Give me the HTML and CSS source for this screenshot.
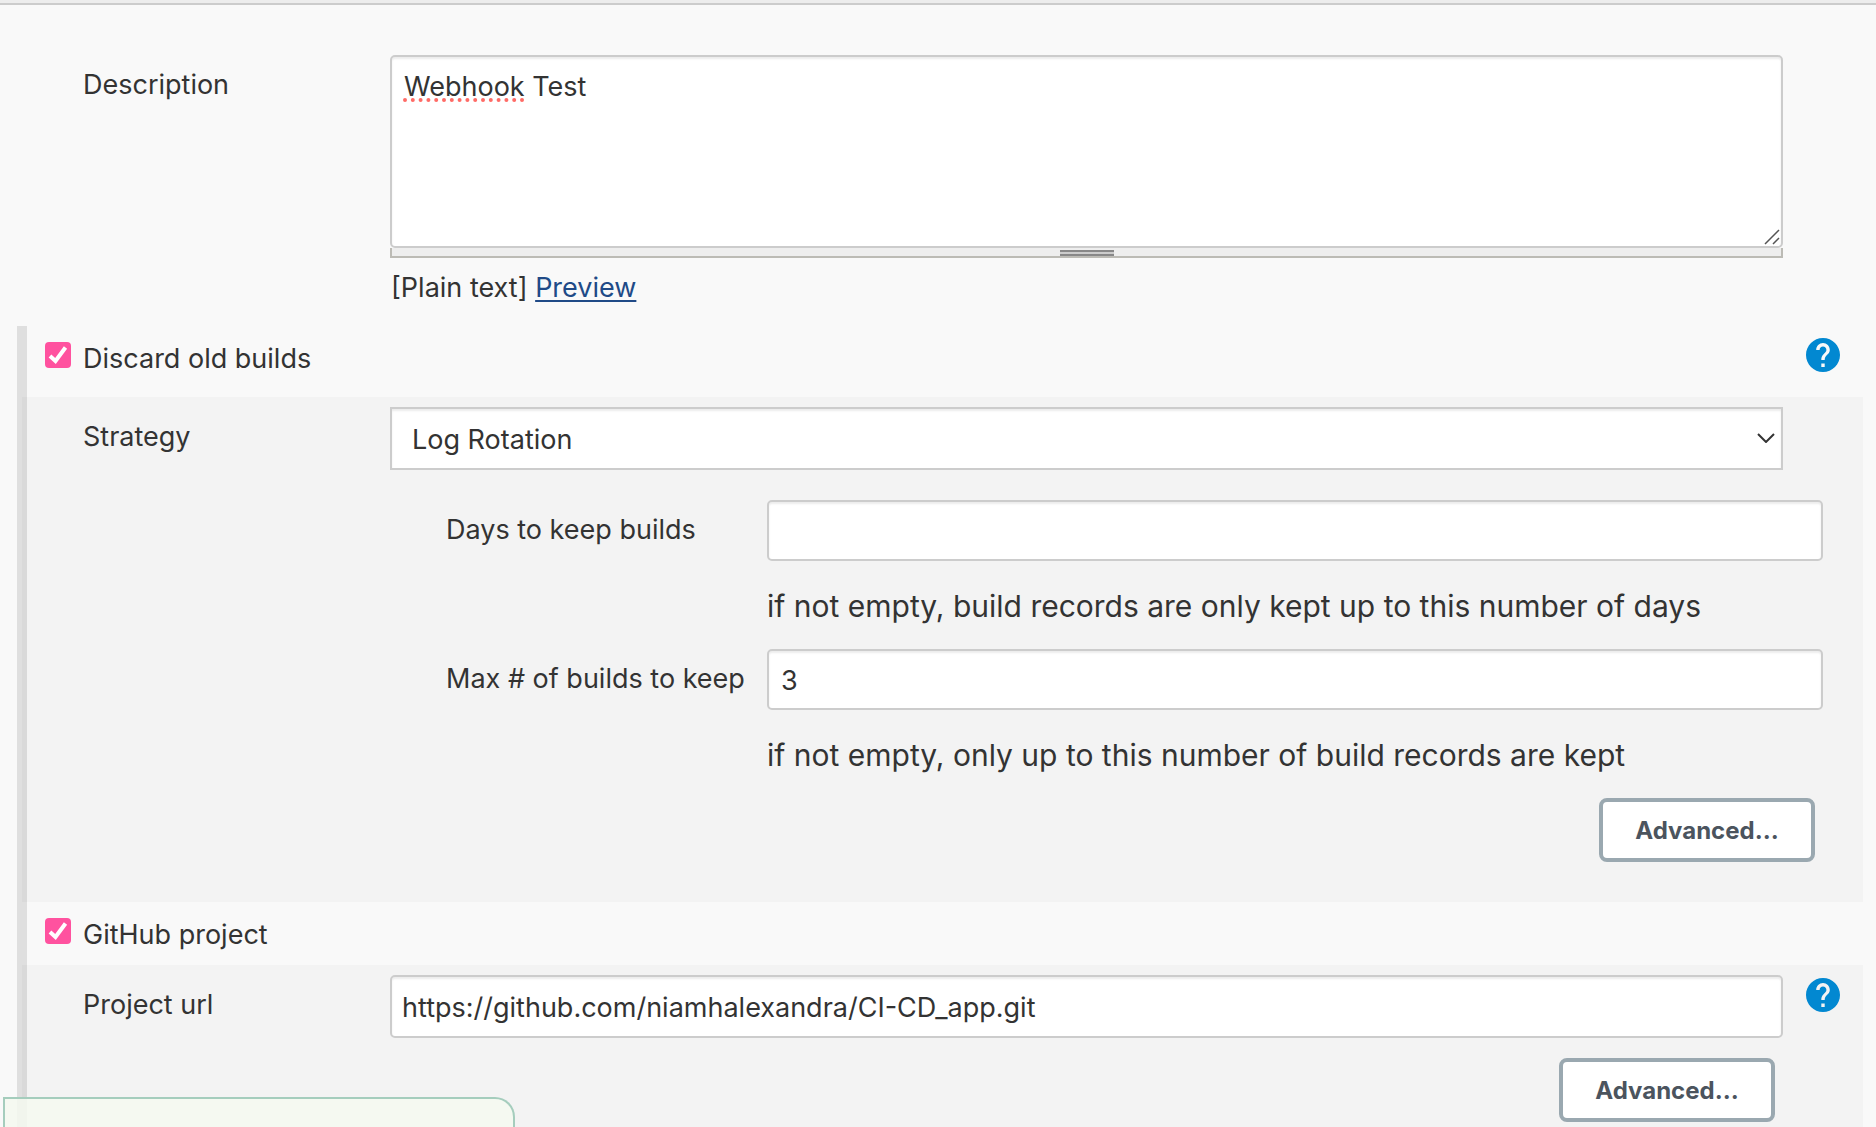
FILE: index.html
```html
<!DOCTYPE html>
<html lang="en">
<head>
<meta charset="utf-8">
<meta name="viewport" content="width=device-width, initial-scale=1">
<title>Job configuration</title>
<link rel="stylesheet" href="styles.css">
</head>
<body>
<div class="topbar"></div>
<form class="config">
  <section class="row row-description">
    <label class="label" for="description">Description</label>
    <div class="field">
      <div class="textarea-wrap">
        <textarea class="control textarea" id="description" spellcheck="false">Webhook Test</textarea>
        <svg class="misspelling" viewBox="0 0 124 4" aria-hidden="true"><path d="M2 2h121"/></svg>
        <svg class="resizer" viewBox="0 0 16 16" aria-hidden="true"><path d="M1 15 15 1M9 15l6-6"/></svg>
      </div>
      <div class="handle"><span class="grip"></span></div>
      <p class="markup">[Plain text] <a href="#preview">Preview</a></p>
    </div>
  </section>

  <div class="options">
    <div class="option option-discard">
      <span class="check">
        <input type="checkbox" class="checkbox" id="discard" checked>
        <svg class="tick" viewBox="0 0 26 26" aria-hidden="true"><path d="M5 14l5.500 5L20.500 5.500"/></svg>
      </span>
      <label class="option-label" for="discard">Discard old builds</label>
      <button type="button" class="help" aria-label="Help for discard old builds">
        <svg viewBox="2 2 20 20" aria-hidden="true"><path d="M12 2C6.480 2 2 6.480 2 12s4.480 10 10 10 10-4.480 10-10S17.520 2 12 2zm1 17h-2v-2h2v2zm2.070-7.750l-.9.920C13.450 12.900 13 13.500 13 15h-2v-.5c0-1.100.45-2.100 1.170-2.830l1.240-1.260c.37-.36.590-.86.590-1.410 0-1.100-.9-2-2-2s-2 .9-2 2H8c0-2.210 1.790-4 4-4s4 1.790 4 4c0 .88-.36 1.680-.93 2.250z"/></svg>
      </button>
    </div>
    <div class="panel panel-discard">
      <div class="row">
        <label class="label" for="strategy">Strategy</label>
        <div class="select-wrap">
          <select class="control select" id="strategy"><option>Log Rotation</option></select>
          <svg class="chevron" viewBox="0 0 18 10" aria-hidden="true"><path d="M1 1l8 8 8-8"/></svg>
        </div>
      </div>
      <div class="nested">
        <label class="label" for="days">Days to keep builds</label>
        <div class="field">
          <input type="text" class="control input" id="days">
          <p class="hint">if not empty, build records are only kept up to this number of days</p>
        </div>
        <label class="label" for="max">Max # of builds to keep</label>
        <div class="field">
          <input type="text" class="control input" id="max" value="3">
          <p class="hint">if not empty, only up to this number of build records are kept</p>
        </div>
      </div>
      <div class="actions actions-nested"><button type="button" class="button">Advanced...</button></div>
    </div>

    <div class="option option-github">
      <span class="check">
        <input type="checkbox" class="checkbox" id="github" checked>
        <svg class="tick" viewBox="0 0 26 26" aria-hidden="true"><path d="M5 14l5.500 5L20.500 5.500"/></svg>
      </span>
      <label class="option-label" for="github">GitHub project</label>
    </div>
    <div class="panel panel-github">
      <div class="row">
        <label class="label" for="url">Project url</label>
        <input type="text" class="control input input-url" id="url" value="https://github.com/niamhalexandra/CI-CD_app.git">
        <button type="button" class="help" aria-label="Help for project url">
          <svg viewBox="2 2 20 20" aria-hidden="true"><path d="M12 2C6.480 2 2 6.480 2 12s4.480 10 10 10 10-4.480 10-10S17.520 2 12 2zm1 17h-2v-2h2v2zm2.070-7.750l-.9.920C13.450 12.900 13 13.500 13 15h-2v-.5c0-1.100.45-2.100 1.170-2.830l1.240-1.260c.37-.36.590-.86.590-1.410 0-1.100-.9-2-2-2s-2 .9-2 2H8c0-2.210 1.790-4 4-4s4 1.790 4 4c0 .88-.36 1.680-.93 2.250z"/></svg>
        </button>
      </div>
      <div class="actions"><button type="button" class="button">Advanced...</button></div>
    </div>
  </div>
</form>
<div class="notice"></div>
</body>
</html>
```

FILE: styles.css
```css
* {
  box-sizing: border-box;
}

body {
  margin: 0;
  min-height: 100vh;
  display: flex;
  flex-direction: column;
  background: #f9f9f9;
  color: #333;
  font: 27px/36px Inter, "Liberation Sans", sans-serif;
}

p {
  margin: 0;
}

.topbar {
  height: 5px;
  background: #ededed;
  border-bottom: 2px solid #ccc;
}

.config {
  flex: 1;
  display: flex;
  flex-direction: column;
  padding: 50px 13px 0 17px;
}

.row {
  display: grid;
  grid-template-columns: 307px 1fr 80px;
  padding-left: 66px;
}

.label {
  padding-top: 12px;
}

.row-description {
  padding-bottom: 20px;
}

.control {
  display: block;
  width: 100%;
  margin: 0;
  border: 2px solid #ccc;
  border-radius: 5px;
  background: #fff;
  box-shadow: inset 0 2px 2px rgba(0, 0, 0, 0.08);
  color: inherit;
  font: inherit;
  outline: 0;
}

.textarea-wrap,
.select-wrap {
  position: relative;
}

.textarea {
  height: 193px;
  padding: 12px;
  resize: none;
}

.misspelling {
  position: absolute;
  top: 43px;
  left: 13px;
  width: 124px;
  height: 4px;
  fill: none;
  stroke: #ff6b66;
  stroke-width: 4;
  stroke-linecap: round;
  stroke-dasharray: 0 7.8;
}

.resizer {
  position: absolute;
  right: 3px;
  bottom: 3px;
  width: 16px;
  height: 16px;
  fill: none;
  stroke: #555;
  stroke-width: 1.5;
}

.handle {
  display: flex;
  justify-content: center;
  height: 10px;
  padding-top: 2px;
  border: 2px solid #bcbbb5;
  border-top: 0;
  background: #eee;
}

.grip {
  width: 54px;
  height: 6px;
  border: solid #888;
  border-width: 2px 0;
  background: #ccc;
}

.markup {
  padding: 12px 0 0 1px;
}

a {
  color: #204a87;
  text-decoration-thickness: 2px;
  text-underline-offset: 3px;
}

.options {
  flex: 1;
  display: flex;
  flex-direction: column;
  border-left: 10px solid #dfdfdf;
}

.option {
  display: flex;
  align-items: flex-start;
  padding: 12px 23px 0 18px;
}

.option-discard {
  height: 71px;
}

.option-github {
  height: 63px;
}

.check {
  display: grid;
  margin: 4px 12px 0 0;
}

.checkbox,
.tick {
  grid-area: 1 / 1;
  width: 26px;
  height: 26px;
  margin: 0;
}

.checkbox {
  appearance: none;
  border-radius: 4px;
  background: #ff529f;
}

.tick {
  fill: none;
  stroke: #fff;
  stroke-width: 4;
  pointer-events: none;
}

.option-label {
  flex: 1;
  padding-top: 3px;
}

.help {
  justify-self: center;
  width: 34px;
  height: 34px;
  margin: 0;
  padding: 0;
  border: 0;
  background: none;
}

.row .help {
  margin-top: 3px;
}

.help svg {
  display: block;
  width: 34px;
  height: 34px;
  fill: #0288d1;
}

.panel {
  margin-left: -5px;
  padding-top: 10px;
  border-left: 5px solid #d9d9d9;
  background: #f3f3f3;
}

.panel .row {
  padding-left: 56px;
}

.panel-discard {
  height: 505px;
}

.panel-github {
  flex: 1;
  padding-bottom: 5px;
}

.select {
  height: 63px;
  padding: 2px 40px 0 20px;
  border-radius: 0;
  appearance: none;
}

.chevron {
  position: absolute;
  top: 26px;
  right: 8px;
  width: 18px;
  height: 10px;
  fill: none;
  stroke: #333;
  stroke-width: 2;
  pointer-events: none;
}

.nested {
  display: grid;
  grid-template-columns: 321px 1fr;
  padding: 30px 40px 0 419px;
}

.input {
  height: 61px;
  padding: 2px 12px 0;
}

.input-url {
  height: 63px;
  padding: 2px 10px 0;
}

.hint {
  height: 88px;
  padding-top: 27px;
  font-size: 30px;
}

.actions {
  display: flex;
  justify-content: flex-end;
  padding: 20px 88px 0 0;
}

.actions-nested {
  padding: 0 48px 0 0;
}

.button {
  width: 216px;
  height: 64px;
  padding: 2px 0 0;
  border: 4px solid #9aa8b0;
  border-radius: 8px;
  background: #fff;
  color: #4b545e;
  font: bold 24px/32px Inter, "Liberation Sans", sans-serif;
}

.notice {
  position: fixed;
  left: 3px;
  bottom: 0;
  width: 512px;
  height: 30px;
  border: 2px solid #a5cdbd;
  border-bottom: 0;
  border-radius: 0 20px 0 0;
  background: rgba(245, 249, 240, 0.85);
}
```
